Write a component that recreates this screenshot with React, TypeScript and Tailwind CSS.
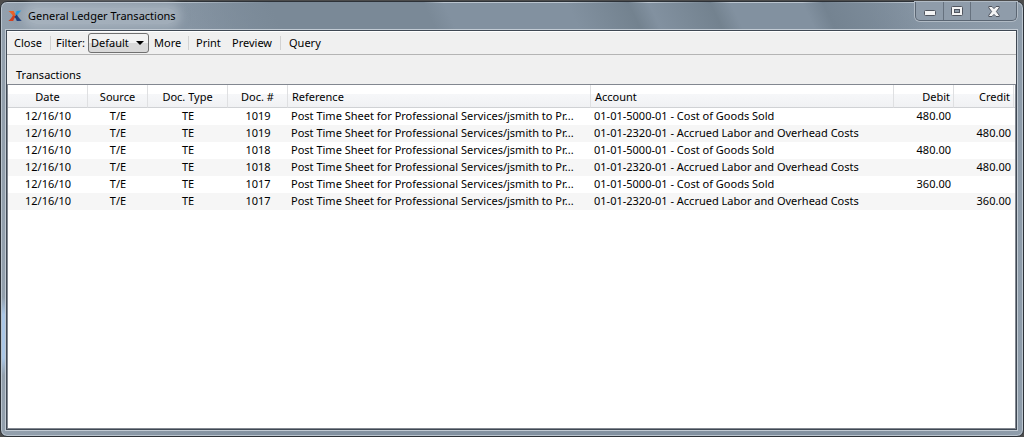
import React from "react";

type Entry = {
  date: string;
  source: string;
  docType: string;
  docNumber: string;
  reference: string;
  account: string;
  debit: string;
  credit: string;
};

const REFERENCE = "Post Time Sheet for Professional Services/jsmith to Pr...";
const COGS = "01-01-5000-01 - Cost of Goods Sold";
const LABOR = "01-01-2320-01 - Accrued Labor and Overhead Costs";

function pair(docNumber: string, amount: string): Entry[] {
  const common = { date: "12/16/10", source: "T/E", docType: "TE", docNumber, reference: REFERENCE };
  return [
    { ...common, account: COGS, debit: amount, credit: "" },
    { ...common, account: LABOR, debit: "", credit: amount },
  ];
}

const entries: Entry[] = [...pair("1019", "480.00"), ...pair("1018", "480.00"), ...pair("1017", "360.00")];

function AppLogo() {
  return (
    <svg width="14" height="12" viewBox="0 0 14 12" aria-hidden="true">
      <path d="M0.5 1 L5.6 1 C6.2 2.6 7 3.8 8.4 4.6 L6.2 7.4 C4.6 5 2.8 3 0.5 1 Z" fill="#e8622a" />
      <path d="M0.3 11 C2.4 9.2 4 7.2 5 5.2 L7.4 6.8 C6.4 8 5.6 9.4 5.2 11 Z" fill="#d2401f" />
      <path d="M8.6 1 L13.4 0.6 C11.6 2.2 10.2 3.8 8.8 5.8 L7 4.2 C7.8 3.2 8.4 2.2 8.6 1 Z" fill="#1e9be0" />
      <path d="M6.4 6.8 L8.8 4.6 C10 6.8 11.6 9 13.8 11 L8.8 11 C8.4 9.4 7.6 8 6.4 6.8 Z" fill="#1b3d7d" />
    </svg>
  );
}

function WindowControls() {
  return (
    <div className="flex h-[19px] w-[102px] shrink-0 rounded-b-[5px] border border-t-0 border-[#5a6572] bg-[#8f9caa] shadow-[0_0_0_1px_#b0bac4]">
      <button type="button" aria-label="Minimize" className="flex h-full w-7 items-center justify-center border-r border-r-[#66717e]">
        <svg className="mt-1" width="12" height="6" viewBox="0 0 12 6">
          <rect x="0.5" y="0.5" width="11" height="5" rx="1" fill="#f4f4f4" stroke="#50555f" />
        </svg>
      </button>
      <button type="button" aria-label="Maximize" className="flex h-full w-[27px] items-center justify-center border-r border-r-[#66717e]">
        <svg width="12" height="10" viewBox="0 0 12 10">
          <rect x="0.5" y="0.5" width="11" height="9" rx="1" fill="#f4f4f4" stroke="#50555f" />
          <rect x="3.5" y="3.5" width="5" height="3" fill="#8f9caa" stroke="#50555f" />
        </svg>
      </button>
      <button type="button" aria-label="Close window" className="flex h-full flex-1 items-center justify-center">
        <svg width="12" height="11" viewBox="0 0 12 11">
          <path
            d="M0.8 0.5 H4 L6 2.6 L8 0.5 H11.2 V1.8 L8.4 5.5 L11.2 9.2 V10.5 H8 L6 8.4 L4 10.5 H0.8 V9.2 L3.6 5.5 L0.8 1.8 Z"
            fill="#f4f4f4"
            stroke="#50555f"
          />
        </svg>
      </button>
    </div>
  );
}

function Separator() {
  return <span className="h-3.5 w-px bg-[#d2d2d2]" />;
}

function Toolbar() {
  return (
    <div className="flex h-6 items-center border-t border-b border-t-white border-b-[#b4b4b4] bg-[#f0f0f0]">
      <button type="button" className="w-[43px] pl-[7px] text-left">Close</button>
      <Separator />
      <label htmlFor="filter" className="w-[37px] pl-[5px]">Filter:</label>
      <div className="grid h-5 w-[61px] items-center">
        <select
          id="filter"
          className="col-start-1 row-start-1 h-5 w-full appearance-none rounded-[3px] border border-[#707070] bg-linear-to-b from-[#f2f2f2] from-50% to-[#d9d9d9] to-50% pl-0.5 text-[11px] text-black"
        >
          <option>Default</option>
        </select>
        <svg className="pointer-events-none col-start-1 row-start-1 mr-[5px] justify-self-end" width="8" height="4" viewBox="0 0 8 4">
          <path d="M0 0 H8 L4 4 Z" fill="#000" />
        </svg>
      </div>
      <button type="button" className="w-[39px] pl-[5px] text-left">More</button>
      <Separator />
      <button type="button" className="w-9 pl-[7px] text-left">Print</button>
      <button type="button" className="w-[55px] pl-[7px] text-left">Preview</button>
      <Separator />
      <button type="button" className="pl-2 text-left">Query</button>
    </div>
  );
}

function Transactions() {
  const th = "border-r border-b border-r-[#dfe0e2] border-b-[#d0d2d5] p-0 font-normal";
  return (
    <table className="w-full table-fixed border-separate border-spacing-0 leading-[15px] whitespace-nowrap">
      <colgroup>
        <col className="w-20" />
        <col className="w-15" />
        <col className="w-20" />
        <col className="w-15" />
        <col className="w-[303px]" />
        <col />
        <col className="w-15" />
        <col className="w-15" />
        <col className="w-px" />
      </colgroup>
      <thead>
        <tr className="h-[23px] bg-linear-to-b from-white from-40% via-[#f6f7f9] via-40% to-[#f0f1f3]">
          <th className={`${th} text-center`}>Date</th>
          <th className={`${th} text-center`}>Source</th>
          <th className={`${th} text-center`}>Doc. Type</th>
          <th className={`${th} text-center`}>Doc. #</th>
          <th className={`${th} pl-1 text-left`}>Reference</th>
          <th className={`${th} pl-1 text-left`}>Account</th>
          <th className={`${th} pr-[3px] text-right`}>Debit</th>
          <th className={`${th} pr-[3px] text-right`}>Credit</th>
          <td className="border-b border-b-[#d0d2d5] p-0" />
        </tr>
      </thead>
      <tbody>
        {entries.map((entry, index) => (
          <tr key={index} className="h-[17px] align-top even:bg-[#f6f6f6]">
            <td className="p-0 text-center">{entry.date}</td>
            <td className="p-0 text-center">{entry.source}</td>
            <td className="p-0 text-center">{entry.docType}</td>
            <td className="p-0 text-center">{entry.docNumber}</td>
            <td className="overflow-hidden p-0 pl-[3px]">{entry.reference}</td>
            <td className="overflow-hidden p-0 pl-[3px]">{entry.account}</td>
            <td className="p-0 pr-[3px] text-right">{entry.debit}</td>
            <td className="p-0 pr-[3px] text-right">{entry.credit}</td>
            <td className="p-0" />
          </tr>
        ))}
      </tbody>
    </table>
  );
}

export default function App() {
  return (
    <div className="h-screen bg-[#4c4c4c] pt-px font-['Noto_Sans','Liberation_Sans',sans-serif] text-[11px] text-black">
      <div className="flex h-full flex-col rounded-[7px] border border-[#2d3238] bg-[#8493a3] bg-[linear-gradient(to_bottom,transparent_68%,#a9c6e6_72%,#a9c6e6_82%,transparent_86%),linear-gradient(to_right,#93a0ad,#8291a0_25%,#8291a0_85%,#8f9dab)] bg-[length:5px_100%,100%_100%] bg-no-repeat pr-1.5 pb-1.5 pl-[5px] shadow-[inset_0_0_0_1px_#bac4ce]">
        <header className="flex h-7 shrink-0 items-start justify-between bg-[linear-gradient(65deg,transparent_18%,#7a8997_27%,#7a8997_42%,transparent_44%,transparent_56%,#73828f_62%,transparent_64%,#73828f_70%,transparent_72%,transparent_79%,#748391_81%,transparent_90%)]">
          <div className="flex h-full items-center gap-1.5 pl-0.5">
            <AppLogo />
            <h1 className="rounded-full bg-[#b9c3cd]/50 shadow-[0_0_8px_5px_rgba(185,195,205,0.5)]">
              General Ledger Transactions
            </h1>
          </div>
          <WindowControls />
        </header>
        <main className="flex min-h-0 flex-1 flex-col border border-[#3f4853] bg-[#f0f0f0] shadow-[0_0_0_1px_#c2cbd4]">
          <Toolbar />
          <h2 className="h-[29px] pt-3 pl-[9px] leading-4">Transactions</h2>
          <div className="min-h-0 flex-1 overflow-hidden border border-[#828790] bg-white">
            <Transactions />
          </div>
        </main>
      </div>
    </div>
  );
}
